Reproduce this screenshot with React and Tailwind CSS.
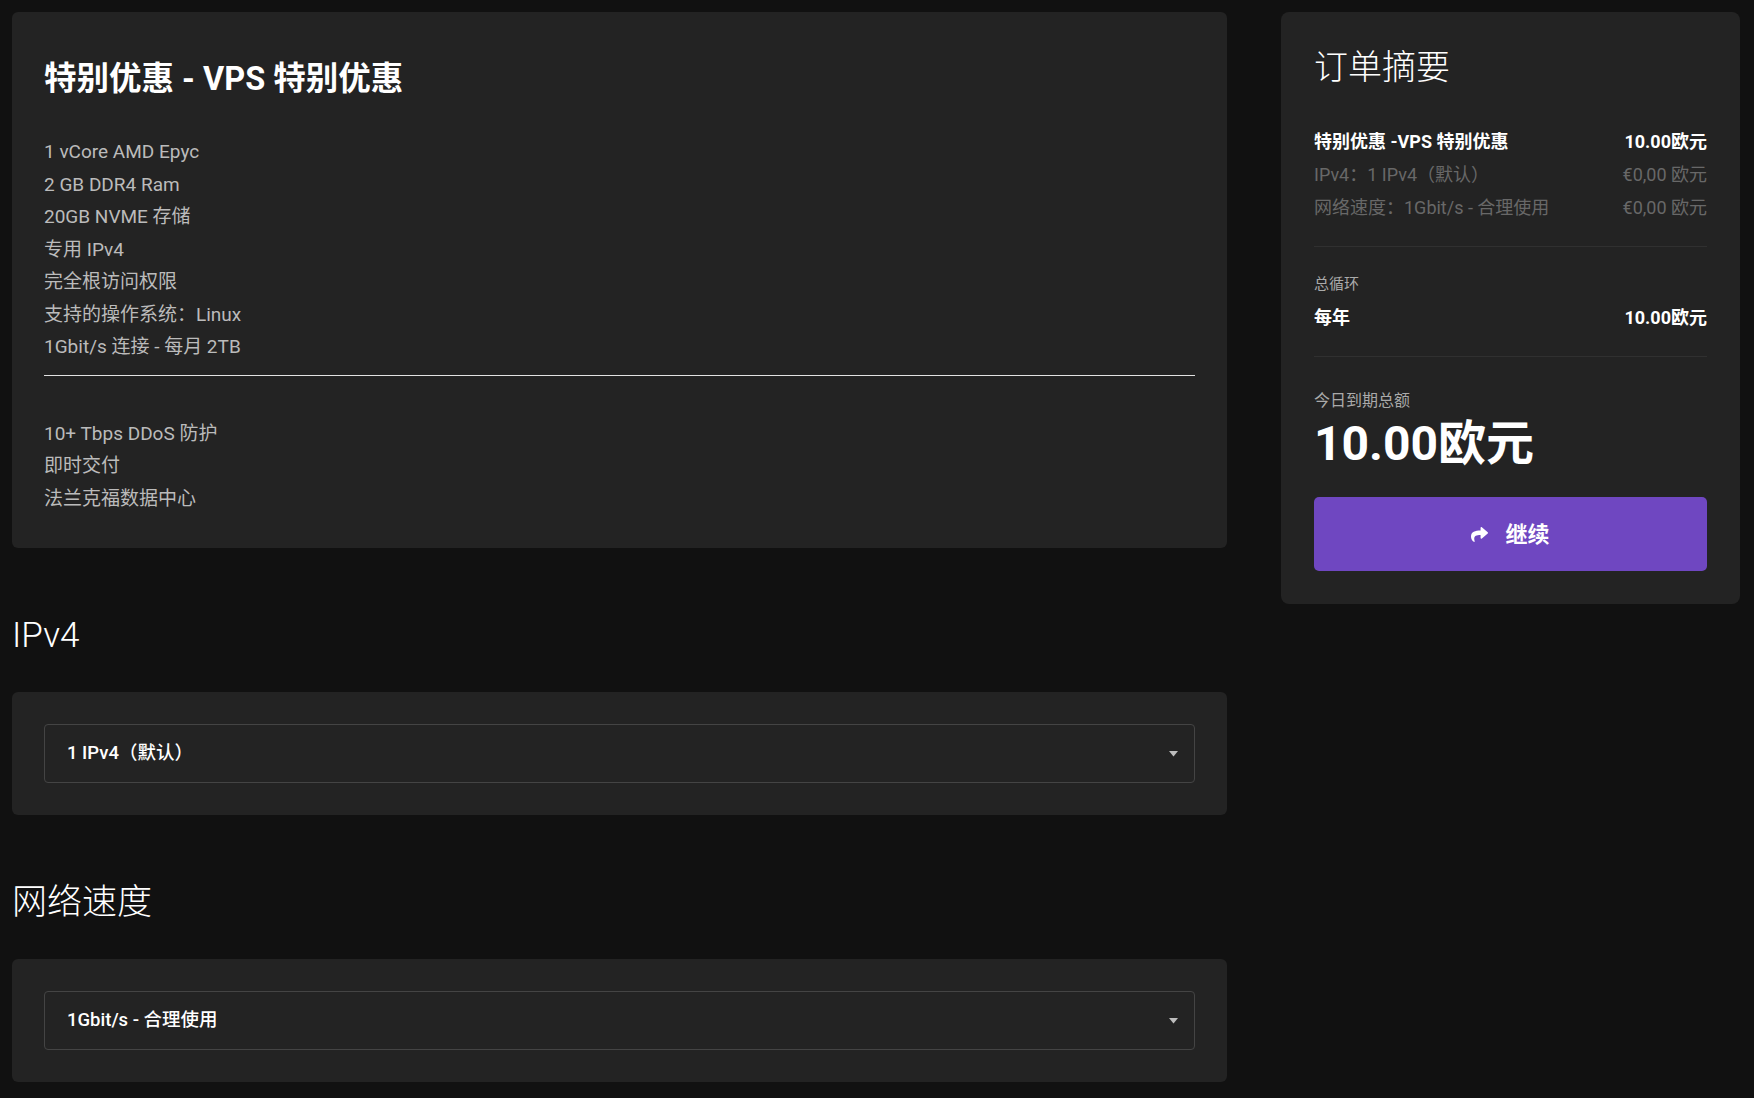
import React from "react";
import { FaShare } from "react-icons/fa";

const font = { fontFamily: "Roboto, 'Noto Sans CJK SC', sans-serif" };

const features = [
  "1 vCore AMD Epyc",
  "2 GB DDR4 Ram",
  "20GB NVME 存储",
  "专用 IPv4",
  "完全根访问权限",
  "支持的操作系统：Linux",
  "1Gbit/s 连接 - 每月 2TB",
];

const extras = ["10+ Tbps DDoS 防护", "即时交付", "法兰克福数据中心"];

const Caret = () => (
  <svg width="9" height="6" viewBox="0 0 9 6" className="shrink-0">
    <path d="M0 0 H9 L4.5 5.5 Z" fill="#bdbdbd" />
  </svg>
);

const SelectCard = ({ value }) => (
  <div className="rounded-[6px] bg-[#232323] p-[32px]">
    <div className="flex h-[59px] items-center justify-between rounded-[4px] border border-[#444444] pl-[22px] pr-[16px]">
      <span className="text-[18.5px] font-medium text-white">{value}</span>
      <Caret />
    </div>
  </div>
);

const SectionTitle = ({ children }) => (
  <h2 className="mt-[68px] mb-[36px] text-[35px] font-light leading-[40px] text-white">
    {children}
  </h2>
);

const SummaryRow = ({ label, price, strong }) => (
  <div
    className={`flex items-center justify-between text-[18px] leading-[33px] ${
      strong ? "font-bold text-white" : "text-[#686868]"
    }`}
  >
    <span>{label}</span>
    <span>{price}</span>
  </div>
);

export default function App() {
  return (
    <div
      style={font}
      className="flex min-h-screen items-start gap-[54px] bg-[#111111] pt-[12px] pl-[12px] pr-[14px] pb-[20px]"
    >
      <div className="w-[1215px] shrink-0">
        <div className="rounded-[6px] bg-[#232323] px-[32px] pt-[49px] pb-[33px]">
          <h1 className="text-[32.5px] font-bold leading-[36px] text-white">
            特别优惠 - VPS 特别优惠
          </h1>
          <ul className="mt-[39px] text-[19px] leading-[32.5px] text-[#bbbbbb]">
            {features.map((f) => (
              <li key={f}>{f}</li>
            ))}
          </ul>
          <div className="mt-[11px] h-px bg-[#e2e2e2]" />
          <ul className="mt-[42px] text-[19px] leading-[32.5px] text-[#bbbbbb]">
            {extras.map((f) => (
              <li key={f}>{f}</li>
            ))}
          </ul>
        </div>

        <SectionTitle>IPv4</SectionTitle>
        <SelectCard value="1 IPv4（默认）" />

        <SectionTitle>网络速度</SectionTitle>
        <SelectCard value="1Gbit/s - 合理使用" />
      </div>

      <div className="w-[459px] shrink-0 rounded-[8px] bg-[#232323] px-[33px] pt-[33px] pb-[33px]">
        <h2 className="text-[34px] font-light leading-[44px] text-white">订单摘要</h2>

        <div className="mt-[36px]">
          <SummaryRow label="特别优惠 -VPS 特别优惠" price="10.00欧元" strong />
          <SummaryRow label="IPv4：1 IPv4（默认）" price="€0,00 欧元" />
          <SummaryRow label="网络速度：1Gbit/s - 合理使用" price="€0,00 欧元" />
        </div>

        <div className="mt-[22px] h-px bg-[#303030]" />

        <div className="mt-[26px] text-[15px] leading-[22px] text-[#aaaaaa]">总循环</div>
        <div className="mt-[6px]">
          <SummaryRow label="每年" price="10.00欧元" strong />
        </div>

        <div className="mt-[22px] h-px bg-[#303030]" />

        <div className="mt-[33px] text-[16px] leading-[22px] text-[#aaaaaa]">今日到期总额</div>
        <div className="mt-[4px] text-[48px] font-bold leading-[56px] text-white">10.00欧元</div>

        <button className="mt-[25px] flex h-[74px] w-full items-center justify-center gap-[17px] rounded-[5px] bg-[#6f47c1] text-[22px] font-bold text-white">
          <FaShare className="h-[17px] w-[17px]" />
          <span>继续</span>
        </button>
      </div>
    </div>
  );
}
